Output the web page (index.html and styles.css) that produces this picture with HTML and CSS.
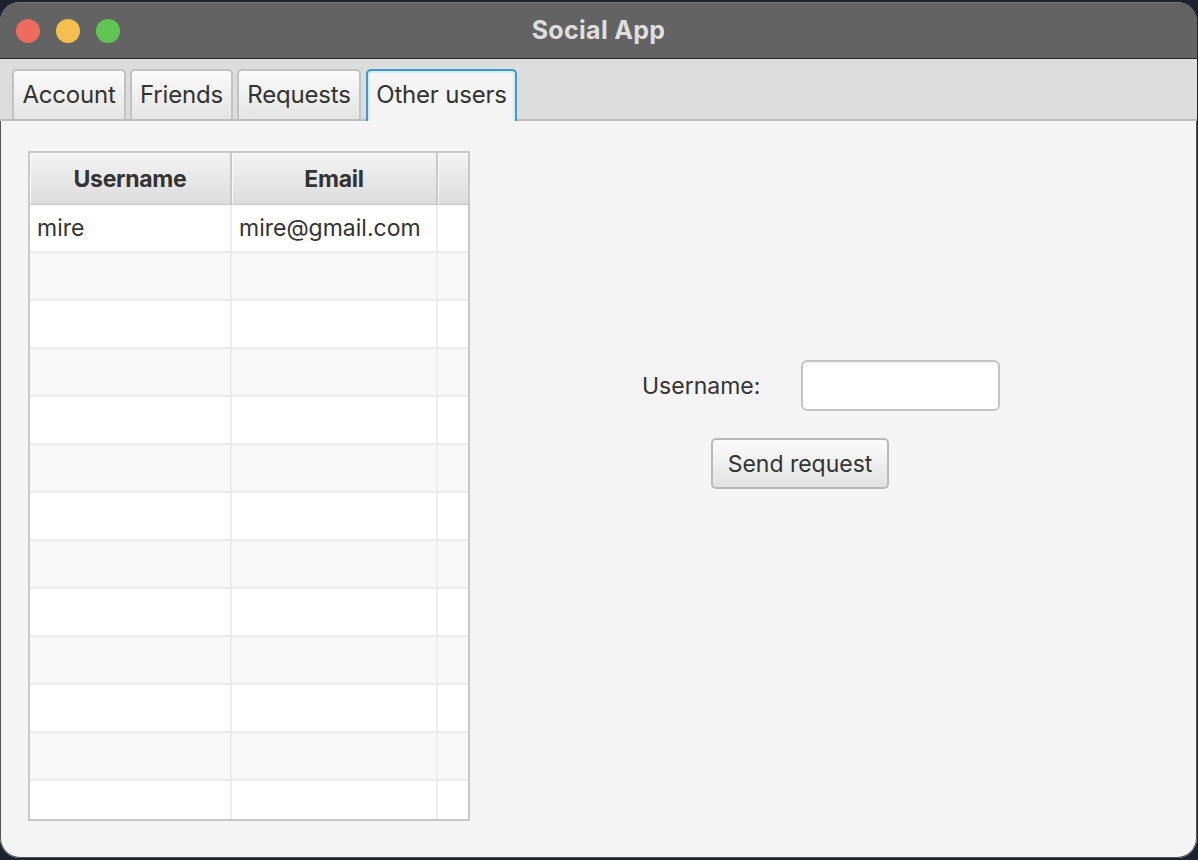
FILE: index.html
```html
<!DOCTYPE html>
<html>
<head>
<meta charset="utf-8">
<link rel="stylesheet" href="styles.css">
</head>
<body>
<div class="window">
  <div class="titlebar">
    <div class="lights">
      <span class="light red"></span>
      <span class="light yellow"></span>
      <span class="light green"></span>
    </div>
    <div class="title">Social App</div>
  </div>
  <div class="tabbar">
    <div class="tab t1">Account</div>
    <div class="tab t2">Friends</div>
    <div class="tab t3">Requests</div>
    <div class="tab t4 selected">Other users</div>
  </div>
  <div class="content">
    <div class="table">
      <div class="thead">
        <div class="th c1">Username</div>
        <div class="th c2">Email</div>
        <div class="th c3"></div>
      </div>
      <div class="tbody">
        <div class="row"><div class="td c1">mire</div><div class="td c2">mire@gmail.com</div><div class="td c3"></div></div>
        <div class="row odd"><div class="td c1"></div><div class="td c2"></div><div class="td c3"></div></div>
        <div class="row"><div class="td c1"></div><div class="td c2"></div><div class="td c3"></div></div>
        <div class="row odd"><div class="td c1"></div><div class="td c2"></div><div class="td c3"></div></div>
        <div class="row"><div class="td c1"></div><div class="td c2"></div><div class="td c3"></div></div>
        <div class="row odd"><div class="td c1"></div><div class="td c2"></div><div class="td c3"></div></div>
        <div class="row"><div class="td c1"></div><div class="td c2"></div><div class="td c3"></div></div>
        <div class="row odd"><div class="td c1"></div><div class="td c2"></div><div class="td c3"></div></div>
        <div class="row"><div class="td c1"></div><div class="td c2"></div><div class="td c3"></div></div>
        <div class="row odd"><div class="td c1"></div><div class="td c2"></div><div class="td c3"></div></div>
        <div class="row"><div class="td c1"></div><div class="td c2"></div><div class="td c3"></div></div>
        <div class="row odd"><div class="td c1"></div><div class="td c2"></div><div class="td c3"></div></div>
        <div class="row last"><div class="td c1"></div><div class="td c2"></div><div class="td c3"></div></div>
      </div>
    </div>
    <div class="form">
      <div class="field">
        <label class="label">Username:</label>
        <div class="input"></div>
      </div>
      <div class="button">Send request</div>
    </div>
  </div>
</div>
</body>
</html>
```

FILE: styles.css
```css
html, body {
  margin: 0;
  padding: 0;
}
body {
  width: 1198px;
  height: 860px;
  background: #1c2230;
  font-family: Inter, "Open Sans", "DejaVu Sans", sans-serif;
  overflow: hidden;
}
.window {
  margin: 2px 1px 0 0;
  height: 856px;
  border-radius: 20px;
  background: #f4f4f4;
  overflow: hidden;
  display: flex;
  flex-direction: column;
  box-shadow: inset 0 0 0 1px #555;
}
.titlebar {
  height: 55px;
  background: #636363;
  border-bottom: 1px solid #2a2a2a;
  border-top: 1px solid #777;
  display: flex;
  align-items: center;
  position: relative;
}
.lights {
  display: flex;
  gap: 16px;
  padding-left: 16px;
  margin-top: 1px;
}
.light {
  width: 24px;
  height: 24px;
  border-radius: 50%;
  display: block;
}
.red { background: #ec6a5e; }
.yellow { background: #f4bf4f; }
.green { background: #61c554; }
.title {
  position: absolute;
  left: 0;
  right: 0;
  top: 12px;
  text-align: center;
  color: #dedede;
  font-weight: 700;
  font-size: 25px;
  letter-spacing: 0.3px;
}
.tabbar {
  height: 50px;
  padding: 10px 0 0 12px;
  background: #dcdcdc;
  border-bottom: 2px solid #bdbdbd;
  display: flex;
  gap: 4px;
  align-items: flex-end;
}
.tab {
  box-sizing: border-box;
  border: 2px solid #c2c2c2;
  border-bottom: none;
  border-radius: 5px 5px 0 0;
  background: linear-gradient(#fafafa, #e4e4e4);
  font-size: 24px;
  color: #333;
  display: flex;
  align-items: center;
  justify-content: center;
  padding-bottom: 2px;
  height: 50px;
  letter-spacing: -0.2px;
}
.t1 { width: 114px; }
.t2 { width: 103px; }
.t3 { width: 124px; }
.t4 { width: 151px; margin-left: 1px; }
.tab.selected {
  background: #f4f4f4;
  border: 2px solid #3a9ad6;
  border-bottom: none;
  box-shadow: inset 0 2px 0 #d5ecf8, inset 2px 0 0 #d5ecf8, inset -2px 0 0 #d5ecf8;
  height: 52px;
  margin-bottom: -2px;
  padding-bottom: 4px;
  position: relative;
}
.content {
  flex: 1;
  display: flex;
  padding: 30px 0 0 28px;
}
.table {
  width: 442px;
  height: 670px;
  box-sizing: border-box;
  border: 2px solid #c8c8c8;
  background: #fff;
  display: flex;
  flex-direction: column;
  overflow: hidden;
}
.thead {
  height: 52px;
  display: flex;
  flex: none;
  border-bottom: 1px solid #c8c8c8;
  box-sizing: border-box;
}
.th {
  background: linear-gradient(#f3f3f3, #dcdcdc);
  box-shadow: inset 1px 1px 0 #fafafa;
  font-weight: 700;
  font-size: 23px;
  color: #333;
  display: flex;
  align-items: center;
  justify-content: center;
  letter-spacing: -0.3px;
}
.c1 { width: 202px; border-right: 2px solid #c8c8c8; box-sizing: border-box; }
.c2 { width: 206px; border-right: 2px solid #c8c8c8; box-sizing: border-box; }
.c3 { flex: 1; }
.td.c1, .td.c2 { border-right: 2px solid #ececec; }
.tbody {
  flex: 1;
  display: flex;
  flex-direction: column;
}
.row {
  height: 48px;
  flex: none;
  display: flex;
  box-sizing: border-box;
  border-bottom: 2px solid #ececec;
  background: #fff;
}
.row.odd { background: #f8f8f8; }
.row.last { border-bottom: none; flex: 1; }
.td {
  font-size: 23px;
  color: #333;
  display: flex;
  align-items: center;
  padding-left: 7px;
}
.form {
  margin-left: 172px;
  padding-top: 209px;
  display: flex;
  flex-direction: column;
}
.field {
  display: flex;
  align-items: center;
}
.label {
  font-size: 23px;
  color: #333;
  width: 159px;
}
.input {
  width: 199px;
  height: 51px;
  box-sizing: border-box;
  border: 2px solid #c4c4c4;
  border-radius: 6px;
  background: linear-gradient(#f6f6f6, #fff 6px);
}
.button {
  margin: 27px 0 0 69px;
  width: 178px;
  height: 51px;
  box-sizing: border-box;
  border: 2px solid #b8b8b8;
  border-radius: 5px;
  background: linear-gradient(#fbfbfb, #e2e2e2);
  font-size: 23px;
  color: #333;
  display: flex;
  align-items: center;
  justify-content: center;
}
```
